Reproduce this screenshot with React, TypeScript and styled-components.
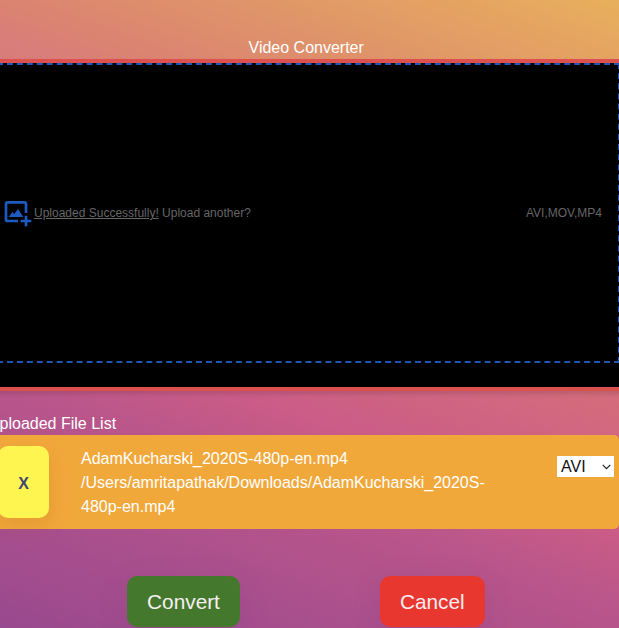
import React from "react";
import styled, { createGlobalStyle } from "styled-components";

const GlobalStyle = createGlobalStyle`
  * { box-sizing: border-box; }
  body { margin: 0; font-family: "Liberation Sans", Helvetica, Arial, sans-serif; }
`;

const Page = styled.main`
  width: 619px;
  height: 628px;
  overflow: hidden;
  display: flex;
  flex-direction: column;
  color: #fff;
  font-size: 16px;
  line-height: 24px;
  background: linear-gradient(20deg, #99498f 0%, #b8558b 27.6%, #ca5c87 37.5%, #d46c7c 53%, #d97e7a 69%, #db8570 74.6%, #e8b05c 100%);
`;

const Title = styled.h1`
  margin: 0;
  height: 59px;
  padding: 35.5px 0 0 248.5px;
  font-size: 16px;
  font-weight: 400;
  line-height: 24px;
  white-space: nowrap;
`;

const UploadPanel = styled.section`
  height: 332px;
  flex: none;
  margin: 0 -10px;
  padding: 0 10px;
  background: #000;
  border: solid #dc514d;
  border-width: 4px 0;
  box-shadow: 0 3px 4px rgba(80, 40, 50, 0.2);
`;

const DropZone = styled.label`
  display: flex;
  align-items: center;
  width: 623px;
  height: 300px;
  margin-left: -3px;
  padding: 0 16px 0 2.5px;
  border: 2px dashed #1d56b4;
  color: #666;
  font-size: 12px;
  line-height: 18px;
`;

const UploadIcon = styled.svg`
  width: 32px;
  height: 32px;
  flex: none;
  fill: #1d5ac2;
`;

const Status = styled.span`
  flex: 1;
  padding-left: 0.5px;
  white-space: nowrap;
`;

const Formats = styled.span`
  white-space: nowrap;
`;

const ListHeading = styled.h2`
  margin: 20px 0 0 -12px;
  height: 24px;
  padding-top: 1px;
  font-size: 16px;
  font-weight: 400;
  line-height: 24px;
`;

const FileRow = styled.div`
  display: flex;
  flex: none;
  height: 94px;
  margin-left: -12px;
  padding: 11px 5px 11px 10px;
  background: #f1a83b;
  border-radius: 5px;
`;

const RemoveButton = styled.button`
  width: 51px;
  height: 72px;
  flex: none;
  padding: 3px 0 0;
  border: 0;
  border-radius: 10px;
  background: #fef551;
  color: #3e4674;
  font: 700 16px "Liberation Sans", Helvetica, sans-serif;
  box-shadow: 0 8px 18px rgba(190, 100, 30, 0.22);
`;

const FileText = styled.p`
  width: 420px;
  margin: 1px 0 0 32px;
`;

const FormatBox = styled.div`
  display: flex;
  align-items: center;
  justify-content: space-between;
  width: 57px;
  height: 21px;
  margin: 10px 0 0 auto;
  padding: 0 3px 0 4px;
  background: #fff;
  color: #111;
  svg { width: 9px; height: 6px; fill: none; stroke: #222; stroke-width: 1.2; }
`;

const Actions = styled.div`
  display: flex;
  gap: 140px;
  margin: 47px 0 0 127px;
`;

const ActionButton = styled.button<{ $color: string; $width: number }>`
  width: ${(p) => p.$width}px;
  height: 51px;
  flex: none;
  padding: 0;
  border: 0;
  border-radius: 10px;
  background: ${(p) => p.$color};
  color: #f8eef3;
  font: 20.8px "Liberation Sans", Helvetica, sans-serif;
  box-shadow: 0 8px 28px rgba(120, 60, 130, 0.2);
`;

export default function App() {
  return (
    <>
      <GlobalStyle />
      <Page>
        <Title>Video Converter</Title>
        <UploadPanel>
          <DropZone>
            <UploadIcon viewBox="0 0 32 32">
              <path d="M5.333 6.667h17.334V16h2.666V6.667C25.333 5.2 24.133 4 22.667 4H5.333C3.867 4 2.667 5.2 2.667 6.667v16c0 1.466 1.2 2.666 2.666 2.666H16v-2.666H5.333z" />
              <path d="M10.667 14.667L6.667 20h14.666L16 12l-4 5.333z" />
              <path d="M25.333 18.667h-2.666v4h-4v2.666h4v4h2.666v-4h4v-2.666h-4z" />
            </UploadIcon>
            <Status><u>Uploaded Successfully!</u> Upload another?</Status>
            <Formats>AVI,MOV,MP4</Formats>
          </DropZone>
        </UploadPanel>
        <ListHeading>Uploaded File List</ListHeading>
        <FileRow>
          <RemoveButton>X</RemoveButton>
          <FileText>
            AdamKucharski_2020S-480p-en.mp4<br />
            /Users/amritapathak/Downloads/AdamKucharski_2020S-<br />
            480p-en.mp4
          </FileText>
          <FormatBox>
            AVI
            <svg viewBox="0 0 9 6"><path d="M.7.8 4.5 4.6 8.3.8" /></svg>
          </FormatBox>
        </FileRow>
        <Actions>
          <ActionButton $color="#44792d" $width={113}>Convert</ActionButton>
          <ActionButton $color="#e8372e" $width={104.5}>Cancel</ActionButton>
        </Actions>
      </Page>
    </>
  );
}
